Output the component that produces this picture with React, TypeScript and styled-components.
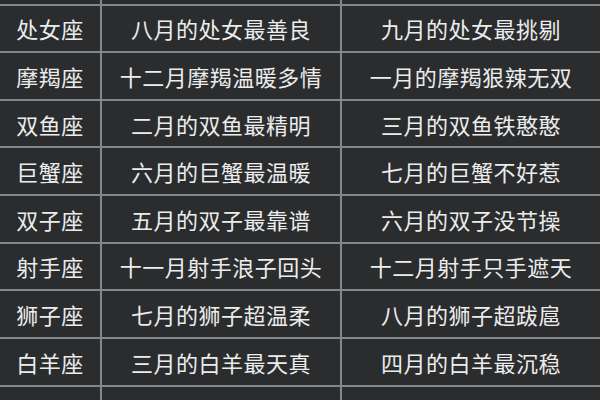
import React from "react";
import styled, { createGlobalStyle } from "styled-components";

const Global = createGlobalStyle`
  html, body { margin: 0; padding: 0; background: #2b2c2e; }
  body { width: 600px; height: 400px; overflow: hidden; }
`;

const Table = styled.div`
  display: grid;
  grid-template-columns: 100px 238px 1fr;
  grid-auto-rows: 45.625px;
  grid-template-rows: 3.5px;
  column-gap: 2px;
  row-gap: 2px;
  width: 600px;
  height: 400px;
  background: #85868a;
  font-family: "Noto Sans CJK SC", "Noto Sans", sans-serif;
  overflow: hidden;
`;

const Cell = styled.div`
  background: #2b2c2e;
  color: #ececec;
  font-size: 22px;
  letter-spacing: 0.5px;
  display: flex;
  align-items: center;
  justify-content: center;
  white-space: nowrap;
  overflow: hidden;
`;

const rows: [string, string, string][] = [
  ["", "", ""],
  ["处女座", "八月的处女最善良", "九月的处女最挑剔"],
  ["摩羯座", "十二月摩羯温暖多情", "一月的摩羯狠辣无双"],
  ["双鱼座", "二月的双鱼最精明", "三月的双鱼铁憨憨"],
  ["巨蟹座", "六月的巨蟹最温暖", "七月的巨蟹不好惹"],
  ["双子座", "五月的双子最靠谱", "六月的双子没节操"],
  ["射手座", "十一月射手浪子回头", "十二月射手只手遮天"],
  ["狮子座", "七月的狮子超温柔", "八月的狮子超跋扈"],
  ["白羊座", "三月的白羊最天真", "四月的白羊最沉稳"],
  ["", "", ""],
];

export default function App() {
  return (
    <>
      <Global />
      <Table>
        {rows.map((r, i) =>
          r.map((t, j) => <Cell key={`${i}-${j}`}>{t}</Cell>)
        )}
      </Table>
    </>
  );
}
